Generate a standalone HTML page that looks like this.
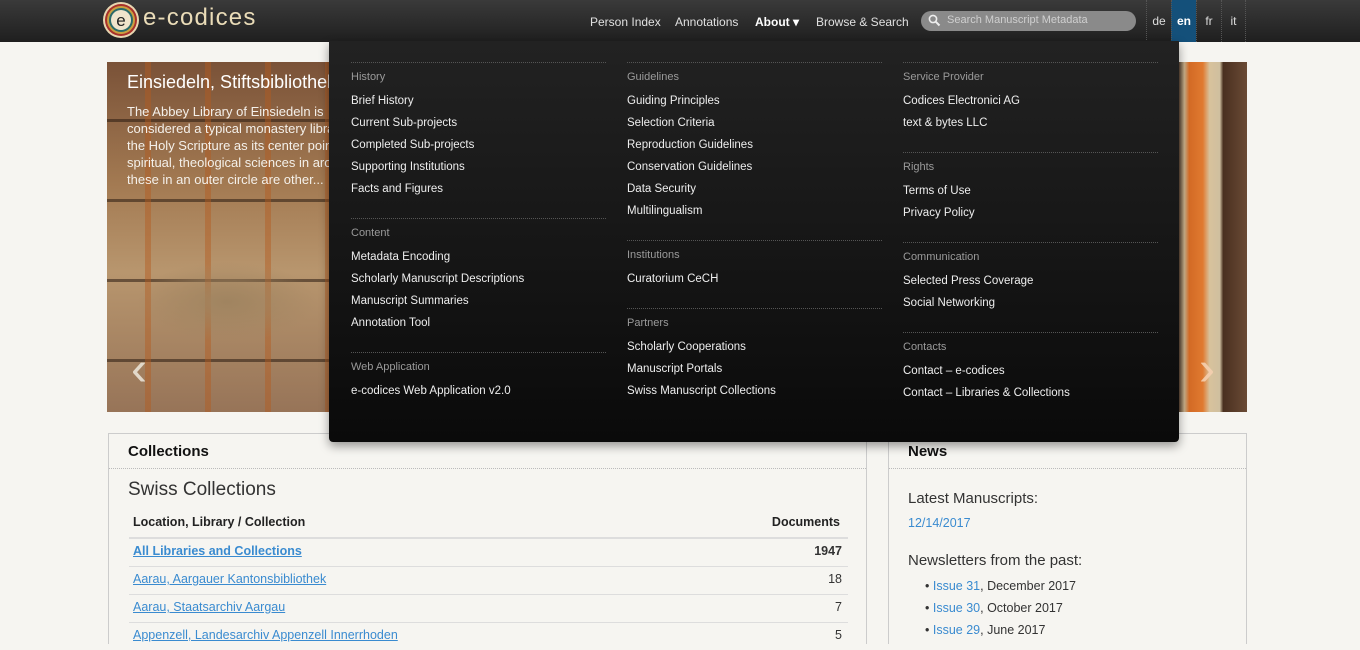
<!DOCTYPE html>
<html><head><meta charset="utf-8"><style>
*{margin:0;padding:0;box-sizing:border-box}
body{width:1360px;height:644px;overflow:hidden;background:#f6f5f1;font-family:"Liberation Sans",sans-serif;position:relative}
.a{position:absolute;white-space:nowrap}
#top{position:absolute;left:0;top:0;width:1360px;height:42px;background:linear-gradient(#3a3a3a,#1f1f1f)}
.nav{font-size:12px;color:#e0e0e0;top:15px}
.lang{position:absolute;top:0;height:42px;width:25px;border-left:1px dotted #555;color:#ddd;font-size:12px;text-align:center;line-height:42px}
#hero{position:absolute;left:107px;top:62px;width:1140px;height:350px;overflow:hidden;
background:
radial-gradient(ellipse 90px 40px at 120px 240px,#a08460 0,transparent 100%),
repeating-linear-gradient(90deg,transparent 0 38px,rgba(180,90,30,.45) 38px 44px,transparent 44px 60px),
repeating-linear-gradient(0deg,transparent 0 50px,rgba(40,25,15,.55) 50px 53px,transparent 53px 80px),
linear-gradient(180deg,#7a5238 0,#a37a52 35%,#b8966e 60%,#977458 100%)}
#hero .r{position:absolute;left:1072px;top:0;width:68px;height:350px;background:linear-gradient(90deg,#5a4535 0,#c8b08a 8%,#d36a25 15%,#e07a30 35%,#d8c29c 45%,#cfbf9f 60%,#4a3020 65%,#6a4a35 100%)}
#dd{position:absolute;left:329px;top:41px;width:850px;height:401px;background:linear-gradient(#222 0,#141414 60%,#0a0a0a 100%);border-radius:0 0 4px 4px;box-shadow:0 4px 10px rgba(0,0,0,.4)}
#in{position:absolute;left:0;top:2px;width:850px}
.ln{position:absolute;width:255px;border-top:1px dotted #555;margin-top:-2px}
.h{position:absolute;font-size:11px;color:#9a9a9a}
.i{position:absolute;font-size:11.5px;color:#eee}
.box{position:absolute;border:1px solid #ccc;border-bottom:none;background:#f6f5f1}
.bt{font-weight:bold;font-size:15px;color:#111;position:absolute}
.row{position:absolute;left:20px;width:719px;border-top:1px solid #ddd;height:28px}
.lk{color:#3a8bd0;text-decoration:underline;font-size:12.5px;position:absolute;left:4px;top:5px}
.n{position:absolute;right:6px;top:5px;font-size:12.5px;color:#333}
</style></head><body>
<div id="top">
 <svg class="a" style="left:102px;top:1px" width="38" height="38" viewBox="0 0 38 38"><circle cx="19" cy="19" r="18" fill="#e8d6b0"/><circle cx="19" cy="19" r="16" fill="#a8302a"/><circle cx="19" cy="19" r="13" fill="#2a6a6a" stroke="#c9a040" stroke-width="2"/><circle cx="19" cy="19" r="10" fill="#f0e4cc"/><text x="19" y="25" font-size="17" text-anchor="middle" fill="#222" font-family="Liberation Sans">e</text></svg>
 <div class="a" style="left:143px;top:4px;font-size:24px;color:#eadcb8;letter-spacing:1.2px">e-codices</div>
 <div class="a nav" style="left:590px">Person Index</div>
 <div class="a nav" style="left:675px">Annotations</div>
 <div class="a nav" style="left:755px;color:#fff;font-weight:bold">About ▾</div>
 <div class="a nav" style="left:816px">Browse &amp; Search</div>
 <div class="a" style="left:921px;top:11px;width:215px;height:20px;border-radius:10px;background:#8a8a8a"></div>
 <svg class="a" style="left:928px;top:14px" width="13" height="13" viewBox="0 0 13 13"><circle cx="5" cy="5" r="3.6" stroke="#eee" stroke-width="1.6" fill="none"/><path d="M7.6 7.6L11.5 11.5" stroke="#eee" stroke-width="2"/></svg>
 <div class="a" style="left:947px;top:14px;font-size:11px;color:#cfcfcf">Search Manuscript Metadata</div>
 <div class="lang" style="left:1146px">de</div>
 <div class="lang" style="left:1171px;background:#14507a;color:#fff;font-weight:bold">en</div>
 <div class="lang" style="left:1196px">fr</div>
 <div class="lang" style="left:1221px;border-right:1px dotted #555">it</div>
</div>
<div id="hero"><div class="r"></div>
 <div class="a" style="left:20px;top:10px;font-size:18px;color:#fff">Einsiedeln, Stiftsbibliothek</div>
 <div class="a" style="left:20px;top:41px;font-size:13px;line-height:17px;color:#f4f0ea;white-space:normal;width:260px">The Abbey Library of Einsiedeln is considered a typical monastery library with the Holy Scripture as its center point, the spiritual, theological sciences in around these in an outer circle are other...</div>
 <div class="a" style="left:24px;top:280px;font-size:48px;color:#eee8dc;opacity:.85">‹</div>
 <div class="a" style="left:1092px;top:280px;font-size:48px;color:#f5d0b0;opacity:.9">›</div>
</div>
<div class="box" style="left:108px;top:433px;width:759px;height:211px">
 <div class="bt" style="left:19px;top:9px">Collections</div>
 <div class="a" style="left:0;top:34px;width:757px;border-top:1px dotted #bbb"></div>
 <div class="a" style="left:19px;top:45px;font-size:19px;color:#333">Swiss Collections</div>
 <div class="a" style="left:24px;top:81px;font-size:12.5px;font-weight:bold;color:#222">Location, Library / Collection</div>
 <div class="a" style="right:26px;top:81px;font-size:12.5px;font-weight:bold;color:#222">Documents</div>
 <div class="row" style="top:103px;border-top:2px solid #ddd"><span class="lk" style="font-weight:bold">All Libraries and Collections</span><span class="n" style="font-weight:bold">1947</span></div>
 <div class="row" style="top:132px"><span class="lk">Aarau, Aargauer Kantonsbibliothek</span><span class="n">18</span></div>
 <div class="row" style="top:160px"><span class="lk">Aarau, Staatsarchiv Aargau</span><span class="n">7</span></div>
 <div class="row" style="top:188px"><span class="lk">Appenzell, Landesarchiv Appenzell Innerrhoden</span><span class="n">5</span></div>
</div>
<div class="box" style="left:888px;top:433px;width:359px;height:211px">
 <div class="bt" style="left:19px;top:9px">News</div>
 <div class="a" style="left:0;top:34px;width:357px;border-top:1px dotted #bbb"></div>
 <div class="a" style="left:19px;top:56px;font-size:15px;color:#333">Latest Manuscripts:</div>
 <div class="a" style="left:19px;top:82px;font-size:12.5px;color:#3a8bd0">12/14/2017</div>
 <div class="a" style="left:19px;top:118px;font-size:15px;color:#333">Newsletters from the past:</div>
 <div class="a" style="left:36px;top:141px;font-size:12.5px;color:#333;line-height:22px">• <span style="color:#3a8bd0">Issue 31</span>, December 2017<br>• <span style="color:#3a8bd0">Issue 30</span>, October 2017<br>• <span style="color:#3a8bd0">Issue 29</span>, June 2017</div>
</div>
<div id="dd"><div id="in">
 <div class="ln" style="left:22px;top:21px"></div><div class="h" style="left:22px;top:28px">History</div>
 <div class="i" style="left:22px;top:52px">Brief History</div><div class="i" style="left:22px;top:74px">Current Sub-projects</div><div class="i" style="left:22px;top:96px">Completed Sub-projects</div><div class="i" style="left:22px;top:118px">Supporting Institutions</div><div class="i" style="left:22px;top:140px">Facts and Figures</div>
 <div class="ln" style="left:22px;top:177px"></div><div class="h" style="left:22px;top:184px">Content</div>
 <div class="i" style="left:22px;top:208px">Metadata Encoding</div><div class="i" style="left:22px;top:230px">Scholarly Manuscript Descriptions</div><div class="i" style="left:22px;top:252px">Manuscript Summaries</div><div class="i" style="left:22px;top:274px">Annotation Tool</div>
 <div class="ln" style="left:22px;top:311px"></div><div class="h" style="left:22px;top:318px">Web Application</div>
 <div class="i" style="left:22px;top:342px">e-codices Web Application v2.0</div>
 <div class="ln" style="left:298px;top:21px"></div><div class="h" style="left:298px;top:28px">Guidelines</div>
 <div class="i" style="left:298px;top:52px">Guiding Principles</div><div class="i" style="left:298px;top:74px">Selection Criteria</div><div class="i" style="left:298px;top:96px">Reproduction Guidelines</div><div class="i" style="left:298px;top:118px">Conservation Guidelines</div><div class="i" style="left:298px;top:140px">Data Security</div><div class="i" style="left:298px;top:162px">Multilingualism</div>
 <div class="ln" style="left:298px;top:199px"></div><div class="h" style="left:298px;top:206px">Institutions</div>
 <div class="i" style="left:298px;top:230px">Curatorium CeCH</div>
 <div class="ln" style="left:298px;top:267px"></div><div class="h" style="left:298px;top:274px">Partners</div>
 <div class="i" style="left:298px;top:298px">Scholarly Cooperations</div><div class="i" style="left:298px;top:320px">Manuscript Portals</div><div class="i" style="left:298px;top:342px">Swiss Manuscript Collections</div>
 <div class="ln" style="left:574px;top:21px"></div><div class="h" style="left:574px;top:28px">Service Provider</div>
 <div class="i" style="left:574px;top:52px">Codices Electronici AG</div><div class="i" style="left:574px;top:74px">text &amp; bytes LLC</div>
 <div class="ln" style="left:574px;top:111px"></div><div class="h" style="left:574px;top:118px">Rights</div>
 <div class="i" style="left:574px;top:142px">Terms of Use</div><div class="i" style="left:574px;top:164px">Privacy Policy</div>
 <div class="ln" style="left:574px;top:201px"></div><div class="h" style="left:574px;top:208px">Communication</div>
 <div class="i" style="left:574px;top:232px">Selected Press Coverage</div><div class="i" style="left:574px;top:254px">Social Networking</div>
 <div class="ln" style="left:574px;top:291px"></div><div class="h" style="left:574px;top:298px">Contacts</div>
 <div class="i" style="left:574px;top:322px">Contact – e-codices</div><div class="i" style="left:574px;top:344px">Contact – Libraries &amp; Collections</div>
</div></div>
</body></html>
